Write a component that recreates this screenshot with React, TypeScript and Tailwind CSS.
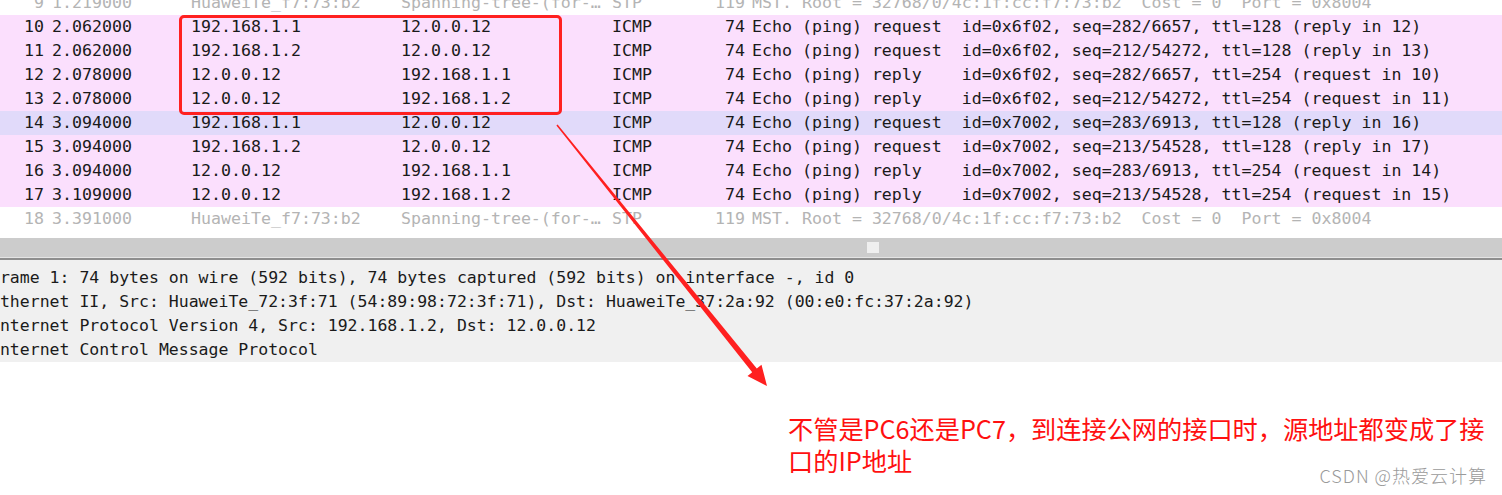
import React from "react";

type Packet = {
  no: string;
  time: string;
  src: string;
  dst: string;
  proto: string;
  len: string;
  info: string;
  kind: "stp" | "icmp" | "selected";
};

const stpInfo = "MST. Root = 32768/0/4c:1f:cc:f7:73:b2  Cost = 0  Port = 0x8004";

const packets: Packet[] = [
  { no: "9", time: "1.219000", src: "HuaweiTe_f7:73:b2", dst: "Spanning-tree-(for-…", proto: "STP", len: "119", info: stpInfo, kind: "stp" },
  { no: "10", time: "2.062000", src: "192.168.1.1", dst: "12.0.0.12", proto: "ICMP", len: "74", info: "Echo (ping) request  id=0x6f02, seq=282/6657, ttl=128 (reply in 12)", kind: "icmp" },
  { no: "11", time: "2.062000", src: "192.168.1.2", dst: "12.0.0.12", proto: "ICMP", len: "74", info: "Echo (ping) request  id=0x6f02, seq=212/54272, ttl=128 (reply in 13)", kind: "icmp" },
  { no: "12", time: "2.078000", src: "12.0.0.12", dst: "192.168.1.1", proto: "ICMP", len: "74", info: "Echo (ping) reply    id=0x6f02, seq=282/6657, ttl=254 (request in 10)", kind: "icmp" },
  { no: "13", time: "2.078000", src: "12.0.0.12", dst: "192.168.1.2", proto: "ICMP", len: "74", info: "Echo (ping) reply    id=0x6f02, seq=212/54272, ttl=254 (request in 11)", kind: "icmp" },
  { no: "14", time: "3.094000", src: "192.168.1.1", dst: "12.0.0.12", proto: "ICMP", len: "74", info: "Echo (ping) request  id=0x7002, seq=283/6913, ttl=128 (reply in 16)", kind: "selected" },
  { no: "15", time: "3.094000", src: "192.168.1.2", dst: "12.0.0.12", proto: "ICMP", len: "74", info: "Echo (ping) request  id=0x7002, seq=213/54528, ttl=128 (reply in 17)", kind: "icmp" },
  { no: "16", time: "3.094000", src: "12.0.0.12", dst: "192.168.1.1", proto: "ICMP", len: "74", info: "Echo (ping) reply    id=0x7002, seq=283/6913, ttl=254 (request in 14)", kind: "icmp" },
  { no: "17", time: "3.109000", src: "12.0.0.12", dst: "192.168.1.2", proto: "ICMP", len: "74", info: "Echo (ping) reply    id=0x7002, seq=213/54528, ttl=254 (request in 15)", kind: "icmp" },
  { no: "18", time: "3.391000", src: "HuaweiTe_f7:73:b2", dst: "Spanning-tree-(for-…", proto: "STP", len: "119", info: stpInfo, kind: "stp" },
];

const details = [
  "Frame 1: 74 bytes on wire (592 bits), 74 bytes captured (592 bits) on interface -, id 0",
  "Ethernet II, Src: HuaweiTe_72:3f:71 (54:89:98:72:3f:71), Dst: HuaweiTe_37:2a:92 (00:e0:fc:37:2a:92)",
  "Internet Protocol Version 4, Src: 192.168.1.2, Dst: 12.0.0.12",
  "Internet Control Message Protocol",
];

const rowClass = {
  stp: "bg-white text-[#b4b4b4]",
  icmp: "bg-[#fbdffd] text-[#1a1a1a]",
  selected: "bg-[#e1dafa] text-[#1a1a1a]",
};

const PacketRow: React.FC<{ p: Packet }> = ({ p }) => (
  <div className={`flex h-[24px] items-center whitespace-pre ${rowClass[p.kind]}`}>
    <div className="w-[48px] shrink-0 pr-[4px] text-right">{p.no}</div>
    <div className="w-[139px] shrink-0 pl-[4px]">{p.time}</div>
    <div className="w-[210px] shrink-0 pl-[4px]">{p.src}</div>
    <div className="w-[211px] shrink-0 pl-[4px]">{p.dst}</div>
    <div className="w-[96px] shrink-0 pl-[4px]">{p.proto}</div>
    <div className="w-[45px] shrink-0 pr-[4px] text-right">{p.len}</div>
    <div className="pl-[3px]">{p.info}</div>
  </div>
);

const App: React.FC = () => {
  return (
    <div className="relative h-[495px] w-[1502px] overflow-hidden bg-white">
      <div className="font-['DejaVu_Sans_Mono',monospace] text-[16.6px] leading-[24px]">
        {/* packet list */}
        <div className="mt-[-9px]">
          {packets.map((p) => (
            <PacketRow key={p.no} p={p} />
          ))}
        </div>

        <div className="h-[7px] bg-white" />

        {/* splitter */}
        <div className="flex h-[19px] items-start justify-start bg-[#cccccc]">
          <div className="ml-[867px] mt-[4px] h-[11px] w-[12px] bg-[#efefef]" />
        </div>
        <div className="h-[1px] bg-[#e4e4e4]" />
        <div className="h-[2px] bg-[#8e8e8e]" />

        {/* packet details */}
        <div className="bg-[#f0f0f0] pt-[6px] text-[16.5px] text-[#1a1a1a]">
          {details.map((d) => (
            <div key={d} className="ml-[-10px] h-[24px] whitespace-pre">
              {d}
            </div>
          ))}
        </div>
      </div>

      {/* annotation text */}
      <div className="mt-[50px] pl-[788px] font-['Noto_Sans_CJK_SC',sans-serif] text-[25.2px] leading-[32px] text-[#ff1010] whitespace-nowrap">
        <div>不管是PC6还是PC7，到连接公网的接口时，源地址都变成了接</div>
        <div>口的IP地址</div>
      </div>

      {/* highlight box */}
      <div className="absolute left-[179px] top-[15px] h-[100px] w-[383px] rounded-[5px] border-[3px] border-[#ff2020]" />

      {/* arrow */}
      <svg className="absolute left-0 top-0" width="1502" height="495" viewBox="0 0 1502 495">
        <polygon
          points="556.4,125.5 752.2,372.3 747.5,376 767,386 761.5,364.8 756.8,368.5 557.6,124.5"
          fill="#ff2020"
        />
      </svg>

      {/* watermark */}
      <div className="absolute right-[15px] top-[462px] font-['Noto_Sans_CJK_SC',sans-serif] text-[18px] font-light leading-[26px] tracking-[1px] text-[#9a9a9a]">
        CSDN @热爱云计算
      </div>
    </div>
  );
};

export default App;
